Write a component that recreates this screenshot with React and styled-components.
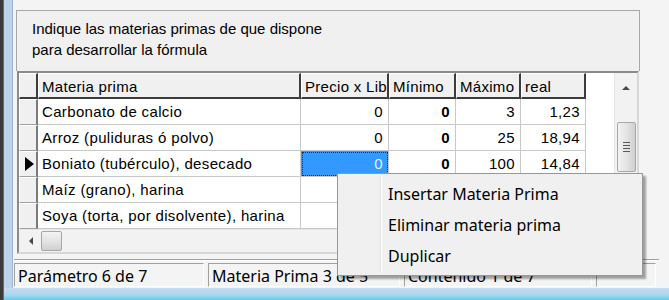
import styled, { createGlobalStyle } from 'styled-components'

const GlobalStyle = createGlobalStyle`
    html, body {
        margin: 0;
        padding: 0;
        background: #f0f0f0;
    }
    * {
        box-sizing: border-box;
    }
`

const Window = styled.div`
    position: relative;
    width: 669px;
    height: 300px;
    display: flex;
    overflow: hidden;
    font-family: "Liberation Sans", Arial, sans-serif;
    color: #000;
`

const DarkEdge = styled.div`
    width: 4px;
    background: #3a3a3a;
    border-right: 1px solid #6b6b6b;
`

const Frame = styled.div`
    flex: 1;
    display: flex;
    flex-direction: column;
`

const Body = styled.div`
    flex: 1;
    display: flex;
`

const BlueSide = styled.div`
    width: 9px;
    background: #bcd3ea;
    border-right: 1px solid #9fb8d2;
`

const BottomEdge = styled.div`
    height: 12px;
    background: linear-gradient(#c6dcef, #a9d6ee 60%, #5ccfef);
`

const Client = styled.div`
    flex: 1;
    display: flex;
    flex-direction: column;
    background: #f4f4f4;
    padding: 10px 0 0 3px;
`

const Prompt = styled.div`
    width: 624px;
    height: 61px;
    background: #f0f0f0;
    border: 1px solid #a8a8a8;
    border-bottom: none;
    padding: 7px 0 0 15px;
    font-size: 15px;
    line-height: 21px;
`

const Grid = styled.div`
    margin-left: 1px;
    width: 622px;
    height: 183px;
    display: flex;
    flex-direction: column;
    background: #fff;
    border-top: 2px solid #8a8a8a;
    border-left: 2px solid #8a8a8a;
    border-right: 2px solid #d8d8d8;
    border-bottom: 2px solid #d8d8d8;
`

const GridMain = styled.div`
    flex: 1;
    display: flex;
    min-height: 0;
`

const Table = styled.div`
    flex: 1;
    display: grid;
    grid-template-columns: 19px 263px 88px 67px 65px 65px 1fr;
    grid-auto-rows: 26px;
    align-content: start;
    font-size: 15px;
`

const HeadCell = styled.div`
    display: flex;
    align-items: center;
    padding: 1px 0 0 3px;
    background: #f0f0f0;
    border-top: 1px solid #fff;
    border-left: 1px solid #fff;
    border-right: 2px solid #3c3c3c;
    border-bottom: 2px solid #3c3c3c;
    letter-spacing: 0.3px;
    white-space: nowrap;
    overflow: hidden;
`

const Blank = styled.div`
    background: #fff;
`

const Indicator = styled.div`
    display: flex;
    align-items: center;
    justify-content: center;
    background: #f0f0f0;
    border-top: 1px solid #fff;
    border-left: 1px solid #fff;
    border-right: 2px solid #7a7a7a;
    border-bottom: 1px solid #a0a0a0;
`

const Arrow = styled.span`
    width: 0;
    height: 0;
    border-top: 7px solid transparent;
    border-bottom: 7px solid transparent;
    border-left: 9px solid #000;
    margin-left: 2px;
`

const Cell = styled.div`
    display: flex;
    align-items: center;
    justify-content: ${p => (p.$num ? 'flex-end' : 'flex-start')};
    padding: ${p => (p.$num ? '0 5px 0 0' : '0 0 0 4px')};
    border-right: 1px solid #c8c8c8;
    border-bottom: 1px solid #c8c8c8;
    font-weight: ${p => (p.$bold ? 700 : 400)};
    letter-spacing: 0.35px;
    white-space: nowrap;
    overflow: hidden;
    background: ${p => (p.$selected ? '#3399ff' : '#fff')};
    color: ${p => (p.$selected ? '#e8f2ff' : '#000')};
    outline: ${p => (p.$selected ? '1px dotted #3a2a10' : 'none')};
    outline-offset: -2px;
`

const VScroll = styled.div`
    width: 23px;
    display: flex;
    flex-direction: column;
    align-items: center;
    background: #f2f2f2;
    border-left: 1px solid #e6e6e6;
`

const UpButton = styled.div`
    height: 26px;
    display: flex;
    align-items: center;
    justify-content: center;
`

const UpGlyph = styled.span`
    width: 0;
    height: 0;
    border-left: 4px solid transparent;
    border-right: 4px solid transparent;
    border-bottom: 4px solid #4a4a4a;
    margin-top: 4px;
`

const Thumb = styled.div`
    margin-top: 23px;
    width: 19px;
    height: 50px;
    border: 1px solid #a7a7a7;
    border-radius: 2px;
    background: linear-gradient(90deg, #f3f3f3, #e2e2e2 55%, #d0d0d0);
    display: flex;
    flex-direction: column;
    align-items: center;
    justify-content: center;
    gap: 2px;
`

const Grip = styled.span`
    width: 7px;
    height: 1px;
    background: #5a5a5a;
`

const HScroll = styled.div`
    height: 23px;
    display: flex;
    align-items: center;
    background: #f2f2f2;
    border-top: 1px solid #e6e6e6;
    padding-left: 10px;
    gap: 8px;
`

const LeftGlyph = styled.span`
    width: 0;
    height: 0;
    border-top: 4px solid transparent;
    border-bottom: 4px solid transparent;
    border-right: 4px solid #4a4a4a;
`

const HThumb = styled.div`
    width: 21px;
    height: 20px;
    border: 1px solid #a7a7a7;
    border-radius: 2px;
    background: linear-gradient(#f3f3f3, #e2e2e2 55%, #d0d0d0);
`

const StatusBar = styled.div`
    margin-top: 5px;
    padding-top: 3px;
    border-top: 1px solid #a0a0a0;
    box-shadow: inset 0 1px 0 #fff;
    display: flex;
    gap: 4px;
    margin-left: -2px;
    width: 645px;
`

const StatusPanel = styled.div`
    width: ${p => p.$w}px;
    height: 24px;
    display: flex;
    align-items: center;
    padding: 1px 0 0 3px;
    font-family: "Noto Sans", "Liberation Sans", sans-serif;
    font-size: 16px;
    border-top: 1px solid #a0a0a0;
    border-left: 1px solid #a0a0a0;
    border-right: 1px solid #fff;
    border-bottom: 1px solid #fff;
    white-space: nowrap;
    overflow: hidden;
`

const Menu = styled.div`
    position: absolute;
    left: 337px;
    top: 173px;
    width: 306px;
    height: 103px;
    background: #f0f0f0;
    border: 1px solid #979797;
    box-shadow: 3px 3px 2px rgba(0, 0, 0, 0.35);
    display: flex;
    flex-direction: column;
    padding: 4px 2px;
    font-family: "Noto Sans", "Liberation Sans", sans-serif;
    font-size: 16px;
`

const Gutter = styled.div`
    position: absolute;
    left: 42px;
    top: 2px;
    bottom: 2px;
    width: 2px;
    border-left: 1px solid #e2e3e3;
    border-right: 1px solid #fff;
`

const MenuItem = styled.div`
    height: 32px;
    display: flex;
    align-items: center;
    padding-left: 48px;
    color: #000;
`

// the last two rows are hidden under the context menu past the name column
const rows = [
    { name: 'Carbonato de calcio', precio: '0', min: '0', max: '3', real: '1,23' },
    { name: 'Arroz (puliduras ó polvo)', precio: '0', min: '0', max: '25', real: '18,94' },
    { name: 'Boniato (tubérculo), desecado', precio: '0', min: '0', max: '100', real: '14,84', current: true },
    { name: 'Maíz (grano), harina' },
    { name: 'Soya (torta, por disolvente), harina' },
]

const headers = ['Materia prima', 'Precio x Lib', 'Mínimo', 'Máximo', 'real']

const App = () => {
    return (
        <Window>
            <GlobalStyle />
            <DarkEdge />
            <Frame>
                <Body>
                    <BlueSide />
                    <Client>
                        <Prompt>
                            Indique las materias primas de que dispone
                            <br />
                            para desarrollar la fórmula
                        </Prompt>

                        <Grid>
                            <GridMain>
                                <Table>
                                    <HeadCell />
                                    {headers.map(h => (
                                        <HeadCell key={h}>{h}</HeadCell>
                                    ))}
                                    <Blank />

                                    {rows.map(r => (
                                        <div key={r.name} style={{ display: 'contents' }}>
                                            <Indicator>{r.current && <Arrow />}</Indicator>
                                            <Cell>{r.name}</Cell>
                                            <Cell $num $selected={r.current}>{r.precio}</Cell>
                                            <Cell $num $bold>{r.min}</Cell>
                                            <Cell $num>{r.max}</Cell>
                                            <Cell $num>{r.real}</Cell>
                                            <Blank />
                                        </div>
                                    ))}
                                </Table>

                                <VScroll>
                                    <UpButton>
                                        <UpGlyph />
                                    </UpButton>
                                    <Thumb>
                                        <Grip />
                                        <Grip />
                                        <Grip />
                                        <Grip />
                                    </Thumb>
                                </VScroll>
                            </GridMain>

                            <HScroll>
                                <LeftGlyph />
                                <HThumb />
                            </HScroll>
                        </Grid>

                        <StatusBar>
                            <StatusPanel $w={190}>Parámetro 6 de 7</StatusPanel>
                            <StatusPanel $w={192}>Materia Prima 3 de 5</StatusPanel>
                            <StatusPanel $w={188}>Contenido 1 de 7</StatusPanel>
                            <StatusPanel $w={60} />
                        </StatusBar>
                    </Client>
                </Body>
                <BottomEdge />
            </Frame>

            <Menu>
                <Gutter />
                <MenuItem>Insertar Materia Prima</MenuItem>
                <MenuItem>Eliminar materia prima</MenuItem>
                <MenuItem>Duplicar</MenuItem>
            </Menu>
        </Window>
    )
}

export default App
